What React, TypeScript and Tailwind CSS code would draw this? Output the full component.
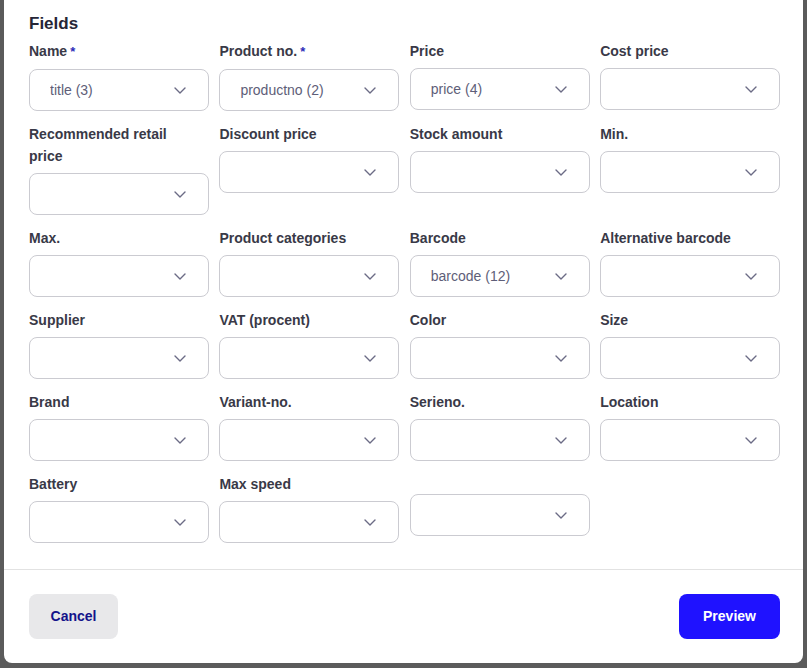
import React from 'react';

interface Field {
  label?: string;
  value?: string;
  required?: boolean;
}

const fields: Field[] = [
  { label: 'Name', value: 'title (3)', required: true },
  { label: 'Product no.', value: 'productno (2)', required: true },
  { label: 'Price', value: 'price (4)' },
  { label: 'Cost price' },
  { label: 'Recommended retail price' },
  { label: 'Discount price' },
  { label: 'Stock amount' },
  { label: 'Min.' },
  { label: 'Max.' },
  { label: 'Product categories' },
  { label: 'Barcode', value: 'barcode (12)' },
  { label: 'Alternative barcode' },
  { label: 'Supplier' },
  { label: 'VAT (procent)' },
  { label: 'Color' },
  { label: 'Size' },
  { label: 'Brand' },
  { label: 'Variant-no.' },
  { label: 'Serieno.' },
  { label: 'Location' },
  { label: 'Battery' },
  { label: 'Max speed' },
  {},
];

const Chevron = () => (
  <svg width="12" height="7" viewBox="0 0 12 7" fill="none" className="shrink-0">
    <path d="M1 1l5 5 5-5" stroke="#6b6b85" strokeWidth="1.4" strokeLinecap="round" strokeLinejoin="round" />
  </svg>
);

const SelectBox = ({ value }: { value?: string }) => (
  <button className="w-full h-[42px] rounded-lg border border-[#cbcbd1] bg-white pl-5 pr-[22px] flex items-center justify-between text-left">
    <span className="text-[14px] text-[#5e5e78] truncate">{value ?? ''}</span>
    <Chevron />
  </button>
);

export default function App() {
  return (
    <div className="w-[807px] h-[668px] bg-[#5b5b5b] px-1 pb-[5px] font-['Liberation_Sans',Arial,sans-serif]">
      <div className="bg-white rounded-b-lg h-[663px] flex flex-col">
        <div className="pl-[25px] pr-[23px] pt-[11px] pb-[26px]">
          <h2 className="text-[17px] leading-[26px] font-bold text-[#262637] mb-[1px]">Fields</h2>

          <div className="grid grid-cols-4 gap-x-[10.5px] gap-y-[10px] items-start">
            {fields.map((f, i) => (
              <div key={i} className="flex flex-col">
                {f.label ? (
                  <label className="text-[14px] leading-[22px] font-bold text-[#393947] pt-[2px] mb-[6px] pr-2">
                    {f.label}
                    {f.required && <span className="text-[#2d2db8] text-[13px] ml-[3px]">*</span>}
                  </label>
                ) : (
                  <div className="h-[15px] mb-2"></div>
                )}
                <SelectBox value={f.value} />
              </div>
            ))}
          </div>
        </div>

        <div className="border-t border-[#e2e2e2] pl-[25px] pr-[23px] pt-6 pb-6 flex items-center justify-between">
          <button className="w-[89px] h-[45px] rounded-lg bg-[#e8e8ea] text-[#13138a] text-[14px] font-bold">
            Cancel
          </button>
          <button className="w-[101px] h-[45px] rounded-lg bg-[#1f12ff] text-white text-[14px] font-bold">
            Preview
          </button>
        </div>
      </div>
    </div>
  );
}
